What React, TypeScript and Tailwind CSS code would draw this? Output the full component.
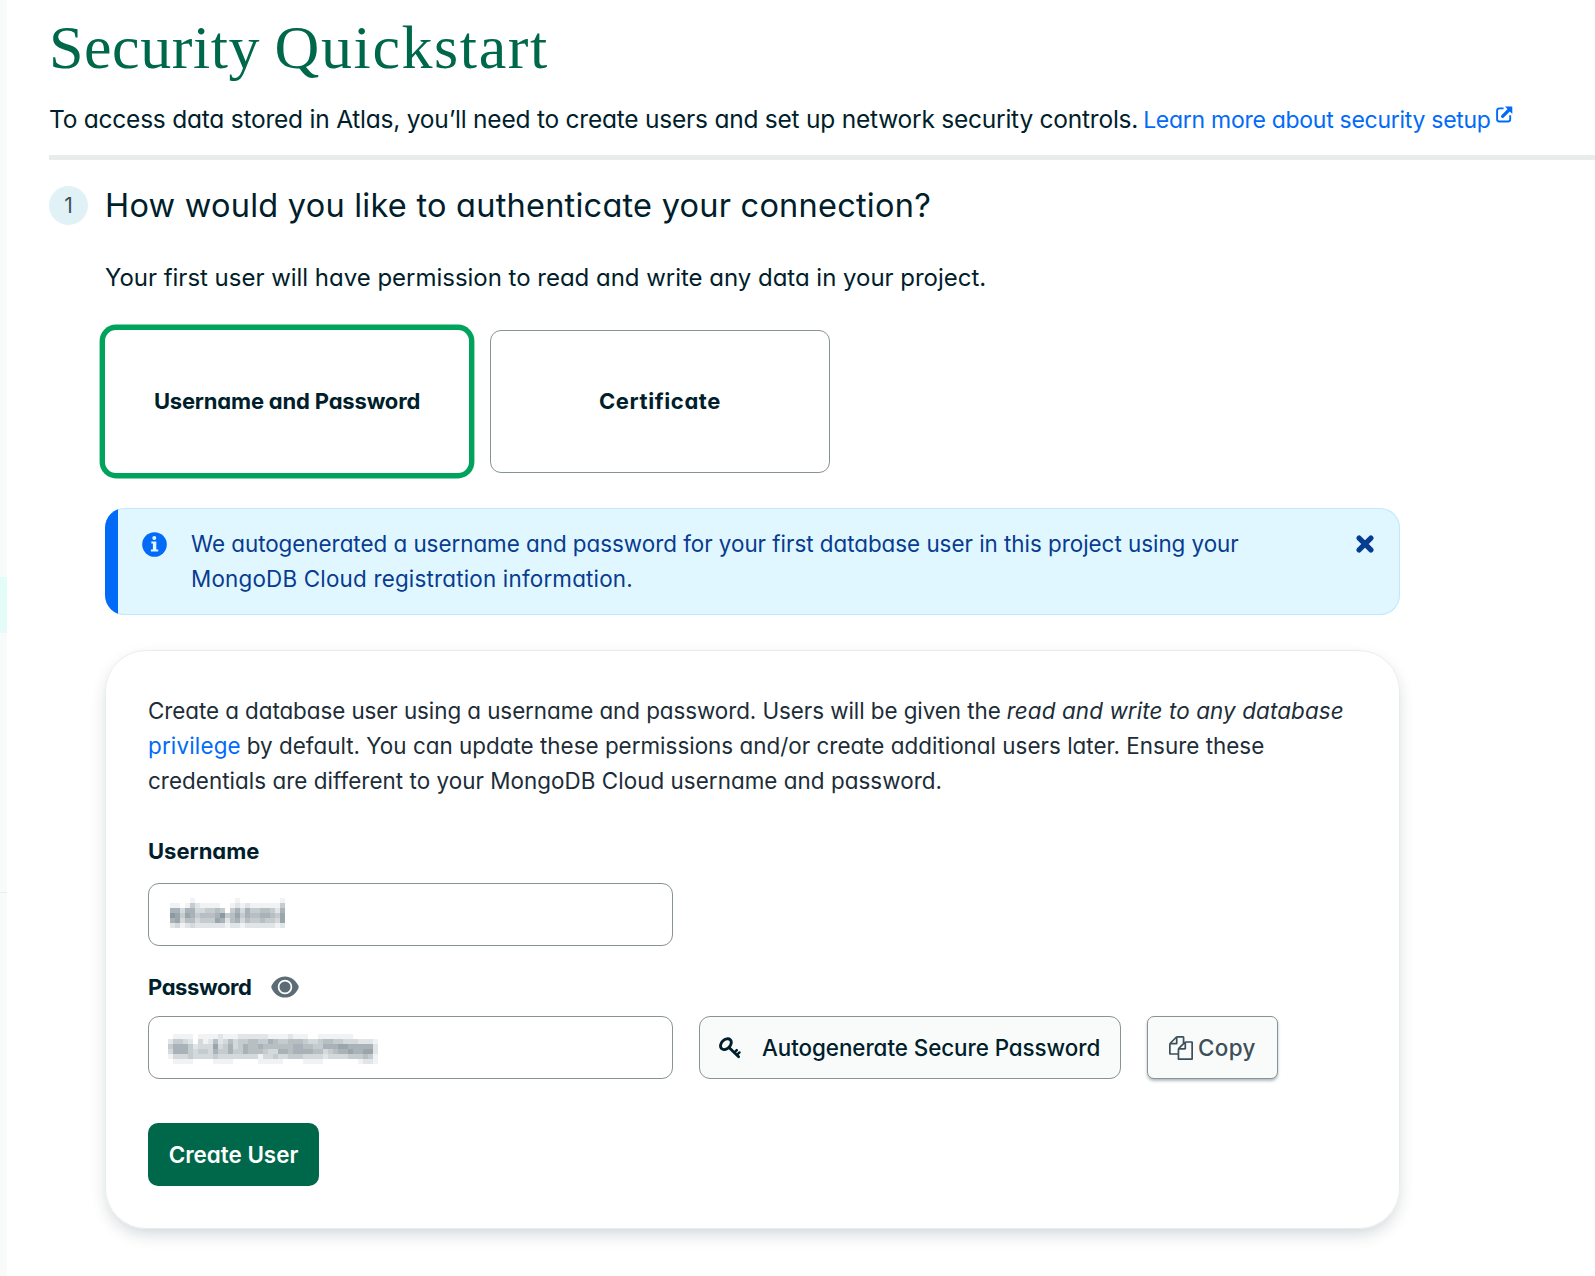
import type { ReactNode } from "react";

/* Opacity maps (0-9) of the two redacted field values, one digit per 5px cell. */
const USERNAME_MASK = [
  "00001000000001000000001",
  "11014211110012121111114",
  "66366334454046364455426",
  "87476455568457465566547",
  "67355344476256354454437",
  "23123222222122122222212",
];

const PASSWORD_MASK = [
  "011110111121112222221111211100111111100000",
  "244320312523534455446544555433455443332221",
  "466642333734634655655555566554466677666662",
  "366643443644644655543366566665534566766772",
  "133343333433333333133433444333323333444541",
  "011110000111100000111110000111100000001221",
];

function Mosaic({ rows }: { rows: string[] }) {
  return (
    <div className="flex flex-col">
      {rows.map((row, y) => (
        <div key={y} className="flex h-[5px]">
          {row.split("").map((d, x) => (
            <span key={x} className="block h-[5px] w-[5px] bg-[#7d8c94]" style={{ opacity: Number(d) / 9 }} />
          ))}
        </div>
      ))}
    </div>
  );
}

function ExternalLinkIcon() {
  return (
    <svg viewBox="0 0 17 17" className="h-[17px] w-[17px]" fill="none">
      <path d="M7.6 2.4H3.3A2.2 2.2 0 0 0 1.1 4.6v8.7a2.2 2.2 0 0 0 2.2 2.2h8.7a2.2 2.2 0 0 0 2.2-2.2V9.3" stroke="#016bf8" strokeWidth="1.9" />
      <path d="M6.6 10.4 13 4" stroke="#016bf8" strokeWidth="3.2" strokeLinecap="round" />
      <path d="M9 .6H15.6a.7.7 0 0 1 .7.7v6.8Z" fill="#016bf8" />
    </svg>
  );
}

function InfoIcon() {
  return (
    <svg viewBox="0 0 25 25" className="h-[25px] w-[25px]">
      <circle cx="12.5" cy="12.5" r="12.3" fill="#016bf8" />
      <circle cx="12.3" cy="5.9" r="2" fill="#e1f7ff" />
      <path d="M9.3 9.4h5v8.2h1.9v2H8.9v-2h2v-6.2H9.3Z" fill="#e1f7ff" />
    </svg>
  );
}

function CloseIcon() {
  return (
    <svg viewBox="0 0 18 18" className="h-[18px] w-[18px]" stroke="#083c90" strokeWidth="5.2" strokeLinecap="round">
      <path d="m3.1 3.1 11.8 11.8M14.9 3.1 3.1 14.9" />
    </svg>
  );
}

function EyeIcon() {
  return (
    <svg viewBox="0 0 28 22" className="h-[22px] w-7">
      <path d="M14 .4C20 .4 24.4 4 27.2 9.3a3.5 3.5 0 0 1 0 3.4C24.4 18 20 21.6 14 21.6S3.6 18 .8 12.7a3.5 3.5 0 0 1 0-3.4C3.6 4 8 .4 14 .4Z" fill="#5c6c75" />
      <circle cx="14" cy="11" r="6.4" fill="#5c6c75" stroke="#fff" strokeWidth="1.7" />
    </svg>
  );
}

function KeyIcon() {
  return (
    <svg viewBox="0 0 22 22" className="h-[22px] w-[22px]" fill="none" stroke="#001e2b" strokeLinecap="round">
      <ellipse cx="6.9" cy="7.2" rx="6.2" ry="4.4" transform="rotate(-45 6.9 7.2)" strokeWidth="2.9" />
      <path d="M10.3 10.8 19.6 19.8" strokeWidth="2.8" />
      <path d="m15.8 15.2 2-2.1M18.4 17.5l2.1-2.1" strokeWidth="2.4" />
    </svg>
  );
}

function FilesIcon() {
  return (
    <svg viewBox="0 0 1792 1792" className="h-6 w-6" fill="#3d4f58">
      <path d="M1696 384q40 0 68 28t28 68v1216q0 40-28 68t-68 28h-960q-40 0-68-28t-28-68v-288h-544q-40 0-68-28t-28-68v-672q0-40 20-88t48-76l408-408q28-28 76-48t88-20h416q40 0 68 28t28 68v328q68-40 128-40h416zm-544 213l-299 299h299v-299zm-640-384l-299 299h299v-299zm196 647l316-316v-416h-384v416q0 40-28 68t-68 28h-416v640h512v-256q0-40 20-88t48-76zm956 804v-1152h-384v416q0 40-28 68t-68 28h-416v640h896z" />
    </svg>
  );
}

function Sidebar() {
  return (
    <aside className="flex w-[7px] shrink-0 flex-col bg-[#f9fbfa] pt-[577px]">
      <div className="h-14 bg-[#e3fcf7]" />
      <div className="mt-[259px] h-px bg-[#e8edeb]" />
    </aside>
  );
}

function Field({ children }: { children: ReactNode }) {
  return (
    <div className="flex h-[63px] w-[525px] items-start rounded-[11px] border border-[#889397] bg-white">{children}</div>
  );
}

export default function App() {
  return (
    <div className="flex h-[1276px] w-[1595px] overflow-hidden bg-white font-['Inter','Open_Sans',sans-serif] text-[#001e2b] [font-feature-settings:'cv11'] [&_*]:whitespace-nowrap">
      <Sidebar />
      <main className="flex min-w-0 flex-1 flex-col pl-[42px]">
        <h1 className="mt-[11px] h-[72px] font-['Liberation_Serif',serif] text-[62px] leading-[72px] text-[#00684a]">
          <span className="tracking-[0.55px] [word-spacing:-1.5px]">Security </span>
          <span className="tracking-[1.6px]">Quickstart</span>
        </h1>
        <p className="mt-[18px] flex h-9 items-baseline text-[24.5px] leading-9 tracking-[-0.23px]">
          To access data stored in Atlas, you’ll need to create users and set up network security controls.
          <a className="ml-[5px] text-[23px] tracking-[-0.28px] text-[#016bf8]">Learn more about security setup</a>
          <span className="ml-[5px] self-start pt-[5px]">
            <ExternalLinkIcon />
          </span>
        </p>
        <div className="mt-[18px] h-[5px] shrink-0 bg-[#e8edeb]" />

        <div className="mt-[26px] flex h-[39px] items-center">
          <span className="flex h-[39px] w-[39px] items-center justify-center rounded-full bg-[#e1f2f6] text-[21px] text-[#3d4f58]">1</span>
          <h2 className="ml-[17px] text-[32.5px] leading-[39px] tracking-[0.24px]">How would you like to authenticate your connection?</h2>
        </div>

        <section className="flex flex-col pl-14">
          <p className="mt-[35px] text-[24px] leading-9 tracking-[-0.02px]">
            Your first user will have permission to read and write any data in your project.
          </p>

          <div className="mt-[34px] flex h-[143px] gap-[21px] text-[22px] font-bold">
            <div className="flex w-[364px] items-center justify-center rounded-[11px] tracking-[-0.18px] ring-[5.4px] ring-[#00a35c]">
              Username and Password
            </div>
            <div className="flex w-[340px] items-center justify-center rounded-[11px] border border-[#889397] tracking-[0.6px]">
              Certificate
            </div>
          </div>

          <div className="mt-[35px] flex h-[107px] w-[1295px] overflow-hidden rounded-[20px] bg-[#e1f7ff] shadow-[inset_0_0_0_1px_#c3e7fe]">
            <div className="w-[13px] bg-[#016bf8]" />
            <div className="ml-[23.5px] pt-[23.5px]">
              <InfoIcon />
            </div>
            <p className="ml-[24.5px] flex-1 pt-[18px] text-[22.4px] leading-[35px] text-[#083c90]">
              <span className="block tracking-[-0.02px]">
                We autogenerated a username and password for your first database user in this project using your
              </span>
              <span className="block tracking-[0.2px]">MongoDB Cloud registration information.</span>
            </p>
            <div className="mr-[26.5px] pt-[27px]">
              <CloseIcon />
            </div>
          </div>

          <div className="mt-[35px] flex h-[579px] w-[1295px] flex-col rounded-[41px] border border-[#e8edeb] px-[42px] pt-[42px] shadow-[0_7px_17px_-3px_rgba(0,30,43,0.2)]">
            <p className="text-[22.4px] leading-[35px] text-[#1c2d38]">
              <span className="block">
                <span className="tracking-[-0.06px]">Create a database user using a username and password. Users will be given the</span>
                <em className="ml-[6px] tracking-[0.12px]">read and write to any database</em>
              </span>
              <span className="block">
                <a className="tracking-[0.18px] text-[#016bf8]">privilege</a>
                <span className="ml-[6px] tracking-[0.02px]">
                  by default. You can update these permissions and/or create additional users later. Ensure these
                </span>
              </span>
              <span className="block tracking-[0.05px]">credentials are different to your MongoDB Cloud username and password.</span>
            </p>

            <label className="mt-[36px] text-[22px] font-bold leading-[34px]">Username</label>
            <div className="mt-[15px]">
              <Field>
                <div className="ml-[21px] mt-[14px]">
                  <Mosaic rows={USERNAME_MASK} />
                </div>
              </Field>
            </div>

            <div className="mt-[24px] flex h-[34px] items-center">
              <label className="text-[22px] font-bold leading-[34px] tracking-[-0.42px]">Password</label>
              <span className="ml-[20px]">
                <EyeIcon />
              </span>
            </div>
            <div className="mt-[12px] flex">
              <Field>
                <div className="ml-[19px] mt-[17px]">
                  <Mosaic rows={PASSWORD_MASK} />
                </div>
              </Field>
              <button className="ml-[26px] flex h-[63px] w-[422px] items-center rounded-[11px] border border-[#889397] bg-[#f9fbfa] pl-[19px] text-[22.4px] font-medium tracking-[-0.06px]">
                <KeyIcon />
                <span className="ml-[21px]">Autogenerate Secure Password</span>
              </button>
              <button className="ml-[26px] flex h-[63px] w-[131px] items-center rounded-[7px] border border-[#889397] bg-[#f9fbfa] pl-[21px] text-[22.4px] font-medium tracking-[0.4px] text-[#3d4f58] shadow-[0_2px_3px_rgba(0,30,43,0.3)]">
                <FilesIcon />
                <span className="ml-[5px]">Copy</span>
              </button>
            </div>

            <button className="mt-[44px] h-[63px] w-[171px] rounded-[10px] bg-[#00684a] text-[22.4px] font-semibold text-white">
              Create User
            </button>
          </div>
        </section>
      </main>
    </div>
  );
}
